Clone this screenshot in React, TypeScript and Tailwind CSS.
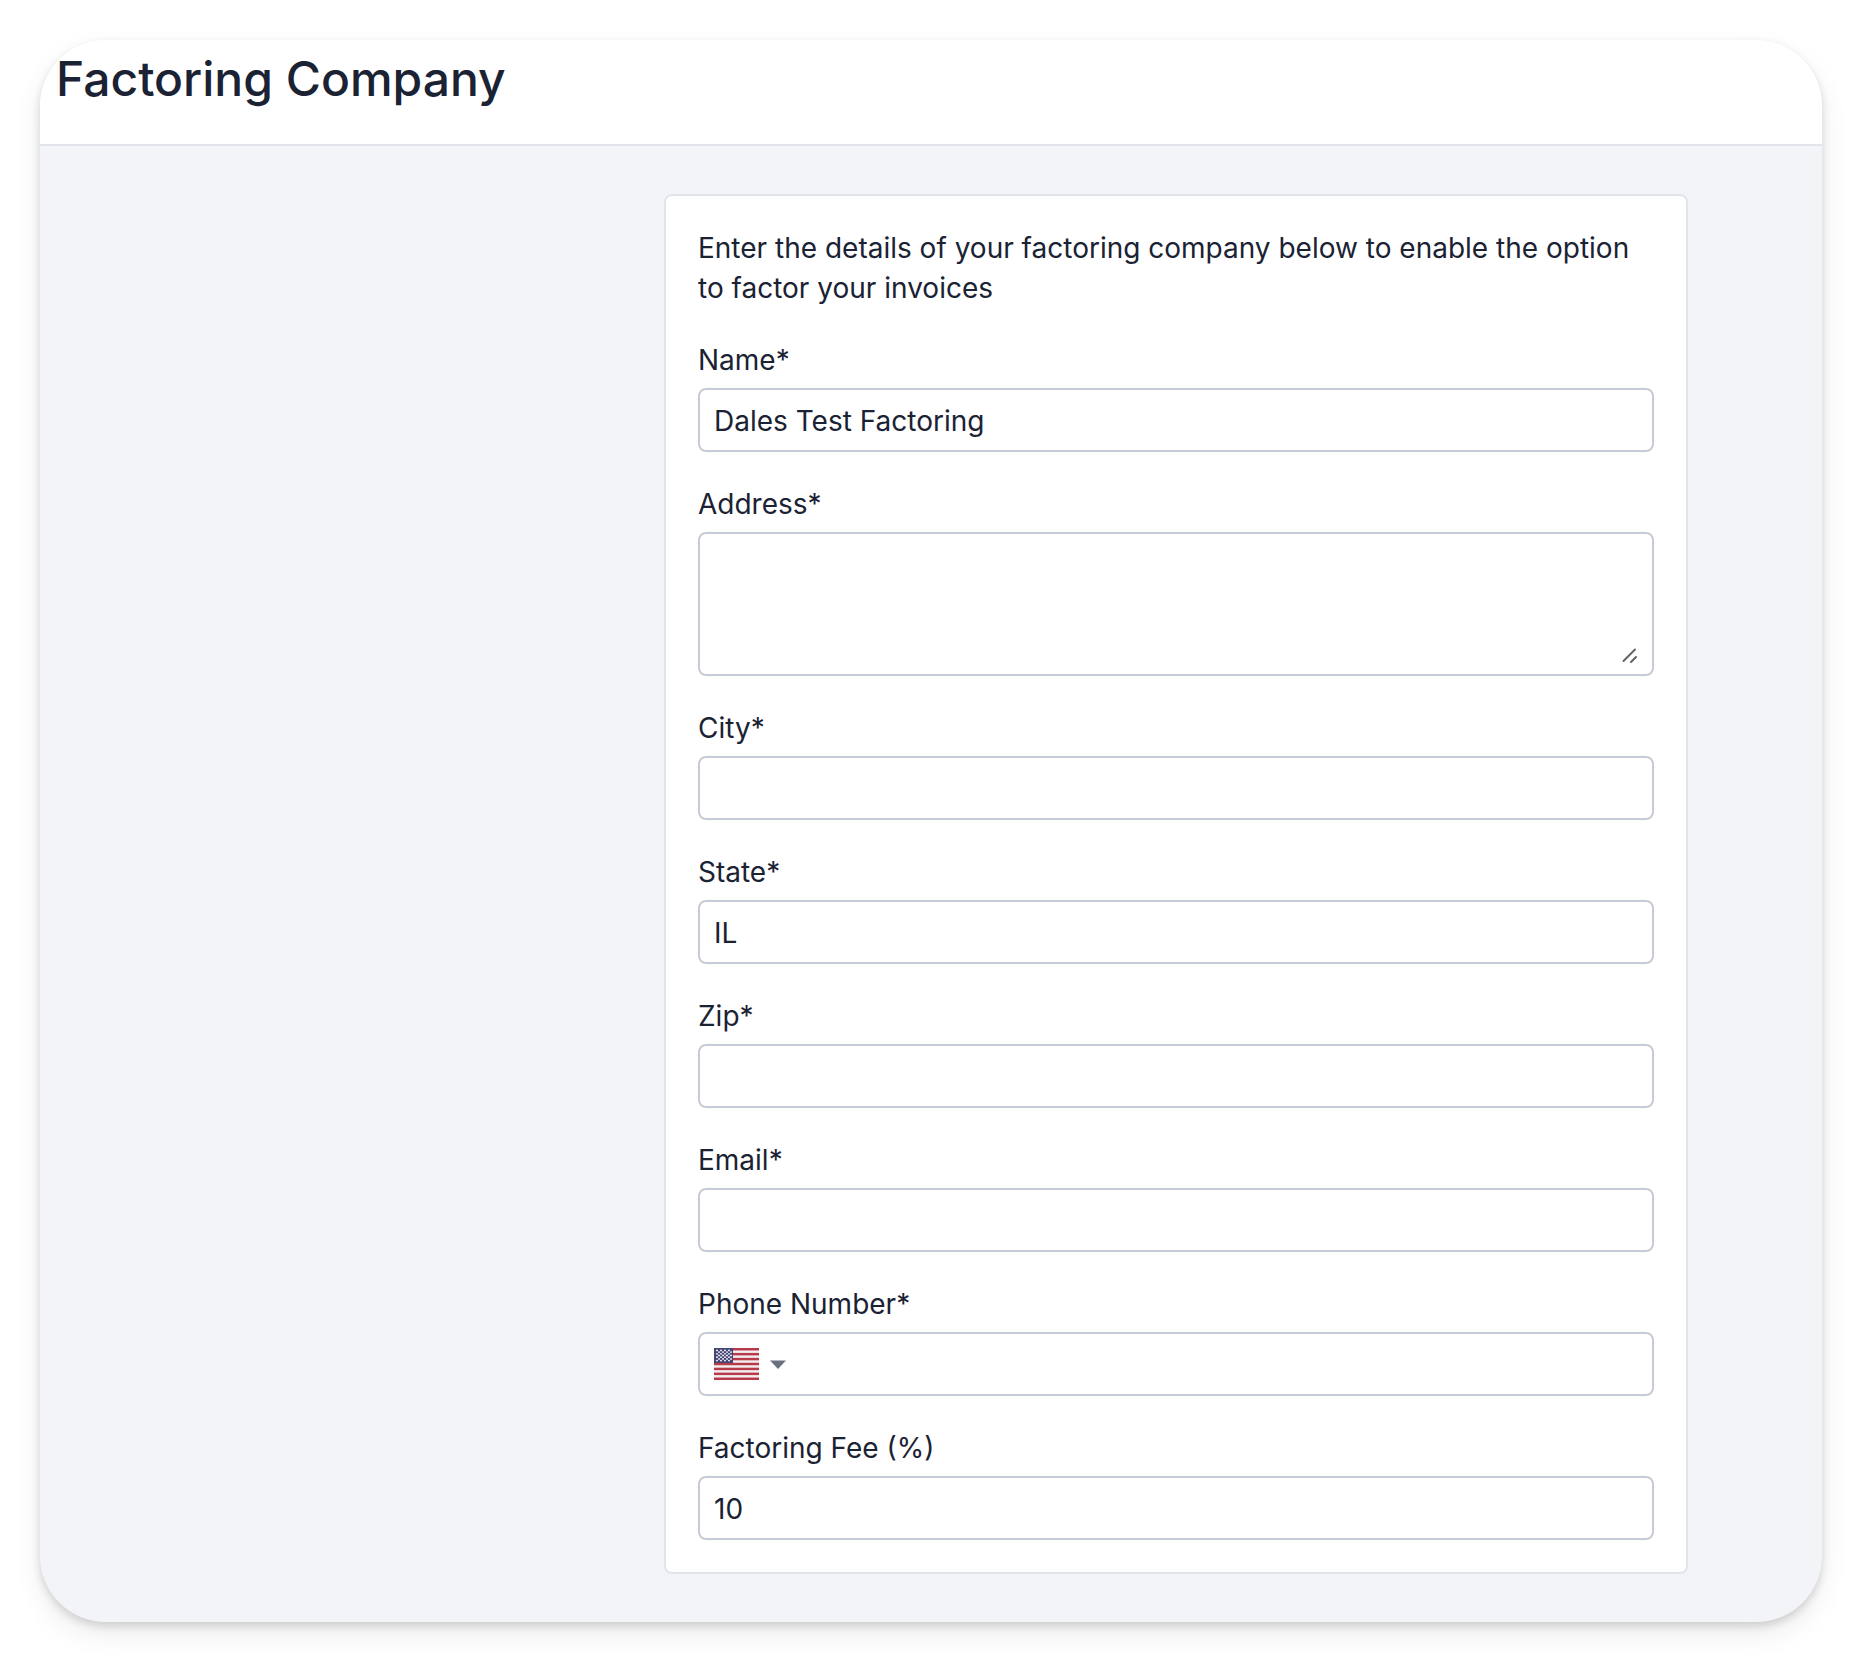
import React, { useState } from 'react';

type FieldProps = {
  id: string;
  label: string;
  children: React.ReactNode;
};

const inputClassName =
  'block w-full h-16 px-3.5 pt-0.5 bg-white border-2 border-[#c6ccd6] rounded-lg leading-10 focus:outline-none focus:border-indigo-400';

const stripes = [0, 2, 4, 6, 8, 10, 12];
const starRows = [0, 1, 2, 3, 4, 5, 6];

const Field = ({ id, label, children }: FieldProps) => (
  <div className="flex flex-col gap-2">
    <label htmlFor={id}>{label}</label>
    {children}
  </div>
);

const UsFlag = () => (
  <svg width="45" height="32" viewBox="0 0 45 32" aria-hidden="true">
    <rect width="45" height="32" fill="#f3eef0" />
    {stripes.map((i) => (
      <rect
        key={i}
        y={(i * 32) / 13}
        width="45"
        height={32 / 13}
        fill="#b83a48"
      />
    ))}
    <rect width="19" height="15" fill="#454677" />
    {starRows.map((row) =>
      (row % 2 === 0 ? [3, 7, 11, 15] : [5, 9, 13, 17]).map((x) => (
        <circle
          key={`${row}-${x}`}
          cx={x}
          cy={2.4 + row * 1.7}
          r="0.9"
          fill="#ffffff"
        />
      ))
    )}
  </svg>
);

const App = () => {
  const [form, setForm] = useState({
    name: 'Dales Test Factoring',
    address: '',
    city: '',
    state: 'IL',
    zip: '',
    email: '',
    phone: '',
    fee: '10',
  });

  const handleChange = (
    e: React.ChangeEvent<HTMLInputElement | HTMLTextAreaElement>
  ) => {
    setForm({ ...form, [e.target.name]: e.target.value });
  };

  const textInput = (name: keyof typeof form, type = 'text') => (
    <input
      id={name}
      name={name}
      type={type}
      value={form[name]}
      onChange={handleChange}
      className={inputClassName}
    />
  );

  return (
    <div className="bg-white p-10 font-['Inter',sans-serif] [font-optical-sizing:none] text-[#1a2233]">
      <main className="overflow-hidden rounded-[66px] bg-[#f3f4f8] shadow-[0_4px_8px_rgba(0,0,0,0.14),0_12px_28px_rgba(0,0,0,0.08)]">
        <header className="bg-white border-b-2 border-[#e1e4ea] px-4 pt-2 pb-[34px]">
          <h1 className="text-5xl leading-[62px] font-medium">
            Factoring Company
          </h1>
        </header>

        <div className="flex justify-end py-12 pl-12 pr-[134px]">
          <form className="flex flex-col gap-8 w-full max-w-5xl p-8 bg-white border-2 border-[#e1e4ea] rounded-lg text-[28px] leading-10">
            <p>
              Enter the details of your factoring company below to enable the
              option to factor your invoices
            </p>

            <Field id="name" label="Name*">
              {textInput('name')}
            </Field>

            <Field id="address" label="Address*">
              <div className="relative">
                <textarea
                  id="address"
                  name="address"
                  value={form.address}
                  onChange={handleChange}
                  className="block w-full h-36 px-3.5 py-2.5 bg-white border-2 border-[#c6ccd6] rounded-lg resize-none focus:outline-none focus:border-indigo-400"
                />
                <svg
                  className="absolute right-4 bottom-3 pointer-events-none"
                  width="16"
                  height="16"
                  viewBox="0 0 16 16"
                  stroke="#636363"
                  strokeWidth="2"
                  strokeLinecap="round"
                  aria-hidden="true"
                >
                  <path d="M1.5 13L13 1.5M9 14L14 9" />
                </svg>
              </div>
            </Field>

            <Field id="city" label="City*">
              {textInput('city')}
            </Field>

            <Field id="state" label="State*">
              {textInput('state')}
            </Field>

            <Field id="zip" label="Zip*">
              {textInput('zip')}
            </Field>

            <Field id="email" label="Email*">
              {textInput('email', 'email')}
            </Field>

            <Field id="phone" label="Phone Number*">
              <div className="flex items-center h-16 px-3.5 bg-white border-2 border-[#c6ccd6] rounded-lg focus-within:border-indigo-400">
                <button
                  type="button"
                  aria-label="Country: United States"
                  aria-haspopup="listbox"
                  className="flex items-center gap-[11px]"
                >
                  <UsFlag />
                  <svg width="16" height="9" viewBox="0 0 16 9" aria-hidden="true">
                    <path d="M0 0.5H16L8 9Z" fill="#6b7080" />
                  </svg>
                </button>
                <input
                  id="phone"
                  name="phone"
                  type="tel"
                  value={form.phone}
                  onChange={handleChange}
                  className="flex-1 ml-3 bg-transparent focus:outline-none"
                />
              </div>
            </Field>

            <Field id="fee" label="Factoring Fee (%)">
              {textInput('fee')}
            </Field>
          </form>
        </div>
      </main>
    </div>
  );
};

export default App;
